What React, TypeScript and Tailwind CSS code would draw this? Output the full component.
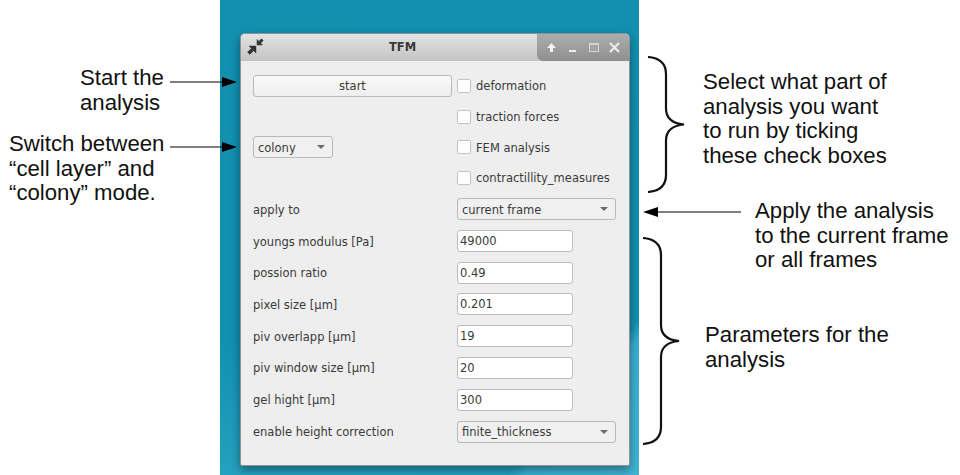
function Arrow({ className, length, flip }: { className: string; length: number; flip?: boolean }) {
  return (
    <svg className={className} width={length} height="12" viewBox={`0 0 ${length} 12`}>
      <g transform={flip ? `translate(${length} 0) scale(-1 1)` : undefined}>
        <line x1="0" y1="6" x2={length - 14} y2="6" stroke="#000" strokeWidth="1.2" />
        <path d={`M${length - 15} 1 L${length} 6 L${length - 15} 11 Z`} fill="#000" />
      </g>
    </svg>
  );
}

function Brace({ className, height }: { className: string; height: number }) {
  const mid = height / 2;
  return (
    <svg className={className} width="40" height={height} viewBox={`0 0 40 ${height}`} fill="none">
      <path
        d={`M2 1 C14 2 20 7 20 18 L20 ${mid - 16} C20 ${mid - 6} 27 ${mid - 1} 38 ${mid} C27 ${mid + 1} 20 ${mid + 6} 20 ${mid + 16} L20 ${height - 18} C20 ${height - 7} 14 ${height - 2} 2 ${height - 1}`}
        stroke="#111"
        strokeWidth="2.2"
      />
    </svg>
  );
}

function Caret() {
  return <span className="w-0 h-0 border-x-[4px] border-x-transparent border-t-[4px] border-t-[#6a6a6a]" />;
}

function Select({ label, className, low }: { label: string; className?: string; low?: boolean }) {
  return (
    <div className={`h-[22px] flex items-center justify-between pl-[4px] pr-[7px] rounded-[3px] border border-[#b9b9b9] bg-[#f0f0f0] ${className}`}>
      <span className={low ? "pt-[2px]" : ""}>{label}</span>
      <Caret />
    </div>
  );
}

function Check({ label, low }: { label: string; low?: boolean }) {
  return (
    <div className="flex items-center h-[22px] gap-[5px]">
      <span className="w-[14px] h-[14px] rounded-[2px] border border-[#c4c4c4] bg-white" />
      <span className={low ? "pt-[2px]" : ""}>{label}</span>
    </div>
  );
}

function Label({ text, low }: { text: string; low?: boolean }) {
  return <div className={`h-[22px] flex items-center ${low ? "pt-[2px]" : ""}`}>{text}</div>;
}

const fields: [string, string, boolean][] = [
  ["youngs modulus [Pa]", "49000", true],
  ["possion ratio", "0.49", false],
  ["pixel size [µm]", "0.201", true],
  ["piv overlapp [µm]", "19", true],
  ["piv window size [µm]", "20", false],
  ["gel hight [µm]", "300", false],
];

function Window() {
  return (
    <div className="w-[390px] h-[433px] rounded-t-[5px] rounded-b-[2px] border border-[#8f9396] bg-[#eeeeee] shadow-[0_4px_10px_rgba(0,0,0,0.4)] overflow-hidden">
      <div className="relative h-[27px] flex items-center pl-[148px] bg-gradient-to-b from-[#e2e2e2] to-[#c4c4c4]">
        <span className="font-bold text-[11.5px] text-[#3a3a3a]">TFM</span>
        <svg className="absolute left-[6px] top-[4px]" width="17" height="17" viewBox="0 0 17 17" fill="#333333" stroke="#333333">
          <path d="M9 8 L9 15 L2 8 Z" strokeWidth="0.5" />
          <path d="M1.5 15.5 L5.5 11.5" strokeWidth="3.5" />
          <path d="M10 7 L10 1.5 L15.5 7 Z" strokeWidth="0.5" />
          <path d="M15.5 1.5 L12.5 4.5" strokeWidth="3" />
        </svg>
        <div className="absolute right-0 top-0 h-[27px] w-[92px] rounded-bl-[6px] flex items-center pl-[4px] bg-gradient-to-b from-[#adadad] to-[#8f8f8f]">
          <span className="w-[21px] flex justify-center">
            <svg width="11" height="11" viewBox="0 0 11 11" fill="#f2f2f2">
              <path d="M5.5 1 L10 6 L7 6 L7 10 L4 10 L4 6 L1 6 Z" />
            </svg>
          </span>
          <span className="w-[21px] flex justify-center">
            <span className="mt-[7px] w-[7px] h-[2px] bg-[#ececec]" />
          </span>
          <span className="w-[21px] flex justify-center">
            <span className="w-[10px] h-[9px] border border-[#d4d4d4] border-t-2 bg-[#a4a4a4]" />
          </span>
          <span className="w-[21px] flex justify-center">
            <svg width="11" height="11" viewBox="0 0 11 11" stroke="#ebebeb" strokeWidth="2.2">
              <path d="M1 1 L10 10 M10 1 L1 10" />
            </svg>
          </span>
        </div>
      </div>
      <div className="grid grid-cols-[199px_159px] gap-x-[5px] grid-rows-[31px_30px_31px_31px_32px_32px_31px_32px_32px_32px_32px_22px] items-start pt-[14px] pl-[12px] text-[11.5px] text-[#3a3a3a] font-['DejaVu_Sans',sans-serif]">
        <div className="h-[22px] flex items-center justify-center rounded-[3px] border border-[#b9b9b9] bg-gradient-to-b from-[#fafafa] to-[#eeeeee]">start</div>
        <Check label="deformation" />
        <div />
        <Check label="traction forces" />
        <Select label="colony" className="w-[80px]" low />
        <Check label="FEM analysis" low />
        <div />
        <Check label="contractillity_measures" />
        <Label text="apply to" low />
        <Select label="current frame" low />
        {fields.map(([label, value, low]) => (
          <div key={label} className="contents">
            <Label text={label} low={low} />
            <div className="h-[22px] w-[116px] flex items-center pl-[2px] pt-[1px] rounded-[3px] border border-[#bcbcbc] bg-white">{value}</div>
          </div>
        ))}
        <Label text="enable height correction" />
        <Select label="finite_thickness" />
      </div>
    </div>
  );
}

export default function App() {
  return (
    <div className="relative w-[960px] h-[475px] overflow-hidden bg-white font-['Liberation_Sans',Arial,sans-serif] text-[22.2px] leading-[24.6px] text-[#111]">
      <div className="ml-[220px] w-[419px] h-[475px] pt-[33px] pl-[20px] bg-[linear-gradient(to_bottom,transparent_72%,rgba(60,180,210,0.45)_100%),linear-gradient(130deg,#1390b0_0%,#1290b0_84%,#38aed0_86%,#45b4d4_100%)] font-['DejaVu_Sans',sans-serif]">
        <Window />
      </div>

      {/* annotations */}
      <div className="absolute left-[80px] top-[66px]">Start the<br />analysis</div>
      <div className="absolute left-[9px] top-[132px]">Switch between<br />“cell layer” and<br />“colony” mode.</div>
      <Arrow className="absolute left-[170px] top-[76px]" length={67} />
      <Arrow className="absolute left-[170px] top-[141px]" length={67} />
      <Arrow className="absolute left-[643px] top-[206px]" length={98} flip />
      <Brace className="absolute left-[646px] top-[56px]" height={137} />
      <Brace className="absolute left-[641px] top-[237px]" height={208} />
      <div className="absolute left-[703px] top-[70px]">Select what part of<br />analysis you want<br />to run by ticking<br />these check boxes</div>
      <div className="absolute left-[755px] top-[199px]">Apply the analysis<br />to the current frame<br />or all frames</div>
      <div className="absolute left-[705px] top-[323px]">Parameters for the<br />analysis</div>
    </div>
  );
}
